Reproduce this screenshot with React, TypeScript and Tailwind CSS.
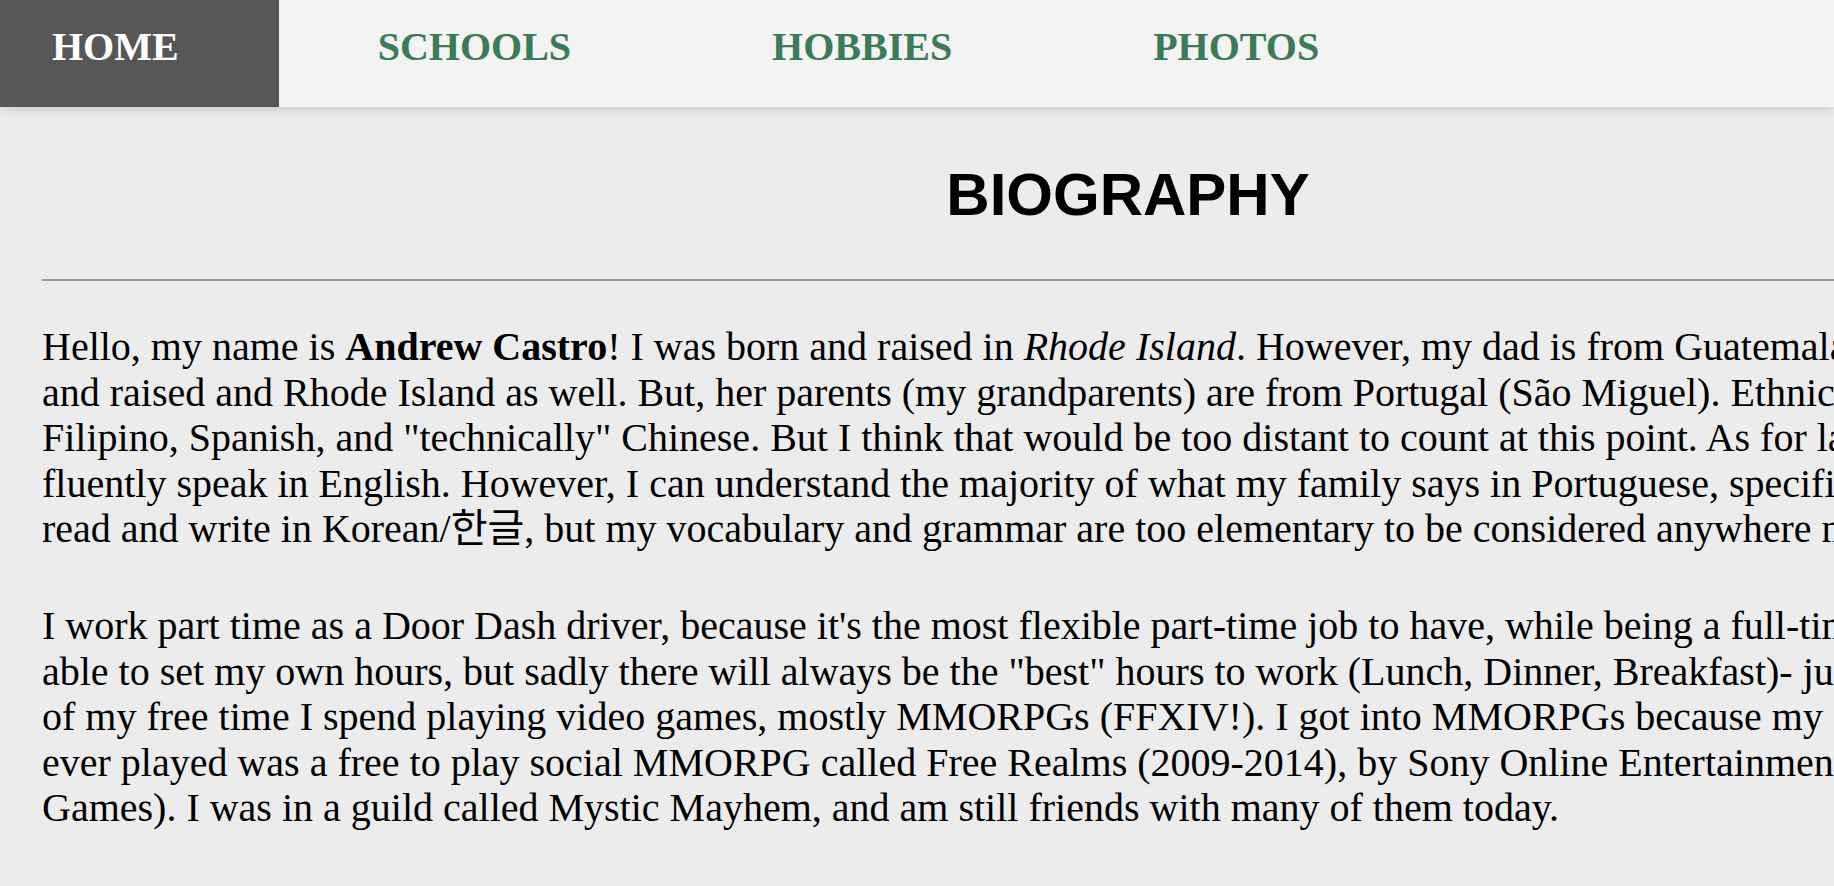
import { FC } from 'react'

const serif = { fontFamily: '"Liberation Serif", "Noto Sans CJK KR", serif' }

const links = ['HOME', 'SCHOOLS', 'HOBBIES', 'PHOTOS']

const NavBar: FC = () => {
  return (
    <nav className="relative z-10 flex h-[107px] gap-[47px] bg-[#f3f3f3] shadow-[0_4px_10px_rgba(0,0,0,0.12)]">
      {links.map((link, i) => (
        <a
          key={link}
          href="#"
          className={`h-full pl-[52px] pt-[24px] text-[40px] leading-[46px] font-bold whitespace-nowrap ${
            i === 0 ? 'pr-[100px] bg-[#575757] text-white' : 'pr-[102px] text-[#3a7c56]'
          }`}
          style={serif}
        >
          {link}
        </a>
      ))}
    </nav>
  )
}

const App: FC = () => {
  return (
    <div className="h-screen w-full overflow-hidden bg-[#ececec] text-black">
      <NavBar />
      <main className="w-[2172px] ml-[42px]">
        <h1
          className="mt-[53px] text-center text-[60px] leading-[69px] font-bold"
          style={{ fontFamily: '"Liberation Sans", Arial, sans-serif' }}
        >
          BIOGRAPHY
        </h1>
        <hr className="mt-[50px] h-[2px] border-0 bg-[#9a9a9a]" />
        <div className="text-[40px] leading-[45.6px] whitespace-nowrap" style={serif}>
          <p className="mt-[43px]">
            Hello, my name is <b>Andrew Castro</b>! I was born and raised in <i>Rhode Island</i>. However, my dad is from Guatemala, and my mom was born
            <br />
            and raised and Rhode Island as well. But, her parents (my grandparents) are from Portugal (São Miguel). Ethnically, I am also part
            <br />
            Filipino, Spanish, and "technically" Chinese. But I think that would be too distant to count at this point. As for languages, I can only
            <br />
            fluently speak in English. However, I can understand the majority of what my family says in Portuguese, specifically. I can also
            <br />
            read and write in Korean/한글, but my vocabulary and grammar are too elementary to be considered anywhere near fluent.
          </p>
          <p className="mt-[51px]">
            I work part time as a Door Dash driver, because it's the most flexible part-time job to have, while being a full-time student. I am
            <br />
            able to set my own hours, but sadly there will always be the "best" hours to work (Lunch, Dinner, Breakfast)- just like any job. Most
            <br />
            of my free time I spend playing video games, mostly MMORPGs (FFXIV!). I got into MMORPGs because my
            <br />
            ever played was a free to play social MMORPG called Free Realms (2009-2014), by Sony Online Entertainment (now Daybreak
            <br />
            Games). I was in a guild called Mystic Mayhem, and am still friends with many of them today.
          </p>
        </div>
      </main>
    </div>
  )
}

export default App
